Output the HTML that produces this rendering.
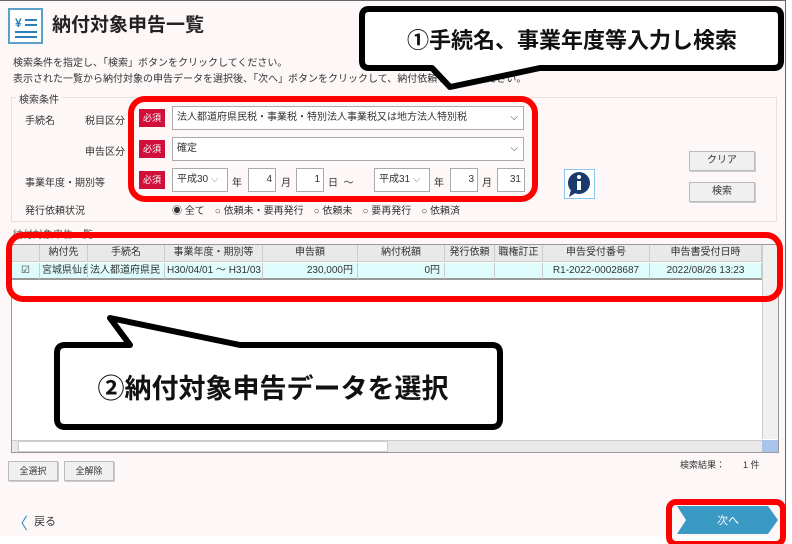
<!DOCTYPE html>
<html><head><meta charset="utf-8"><style>
*{margin:0;padding:0;box-sizing:border-box}
body{width:792px;height:544px;overflow:hidden;background:#fff;font-family:"Liberation Sans","Noto Sans CJK JP",sans-serif;color:#333;position:relative}
.a{position:absolute}
.s{font-size:10px;white-space:nowrap}
.inp{position:absolute;background:#fff;border:1px solid #aaa;font-size:10px;padding-left:4px;line-height:22px;height:24px}
.req{position:absolute;background:#d0103a;color:#fff;font-size:9px;width:26px;height:18px;line-height:18px;text-align:center}
.btn{position:absolute;background:#f0f0f0;border:1px solid #bbb;font-size:10px;text-align:center;box-shadow:1px 1px 0 #ccc}
.th{position:absolute;top:0;height:16px;line-height:16px;font-size:10px;text-align:center;border-right:1px solid #ccc}
.td{position:absolute;top:0;height:16px;line-height:16px;font-size:10px;border-right:1px solid #ccc;overflow:hidden;white-space:nowrap}
</style></head><body>
<div class="a" style="left:0;top:0;width:786px;height:536px;background:#fdf8f7;border-right:1px solid #666;border-top:1px solid #666"></div>
<svg class="a" style="left:8px;top:7px" width="36" height="38"><rect x="1" y="2" width="33" height="34" fill="#fff" stroke="#5aa0c8" stroke-width="2"/><text x="7" y="20" font-size="12" fill="#2a7fb8" font-weight="bold">¥</text><rect x="17" y="12" width="12" height="2" fill="#2a7fb8"/><rect x="17" y="17" width="12" height="2" fill="#2a7fb8"/><rect x="7" y="24" width="22" height="2" fill="#2a7fb8"/><rect x="7" y="29" width="22" height="2" fill="#2a7fb8"/></svg>
<div class="a" style="left:52px;top:10px;font-size:19px;font-weight:bold;color:#222">納付対象申告一覧</div>
<div class="a s" style="left:13px;top:54px">検索条件を指定し、「検索」ボタンをクリックしてください。</div>
<div class="a s" style="left:13px;top:70px">表示された一覧から納付対象の申告データを選択後、「次へ」ボタンをクリックして、納付依頼を行ってください。</div>
<div class="a" style="left:11px;top:97px;width:766px;height:125px;border:1px solid #e6e0de"></div>
<div class="a s" style="left:16px;top:91px;background:#fdf8f7;padding:0 3px">検索条件</div>
<div class="a s" style="left:25px;top:112px">手続名</div>
<div class="a s" style="left:85px;top:112px">税目区分</div>
<div class="a s" style="left:85px;top:143px">申告区分</div>
<div class="a s" style="left:25px;top:174px">事業年度・期別等</div>
<div class="a s" style="left:25px;top:202px">発行依頼状況</div>
<div class="req" style="left:139px;top:109px">必須</div>
<div class="req" style="left:139px;top:140px">必須</div>
<div class="req" style="left:139px;top:171px">必須</div>
<div class="inp" style="left:172px;top:106px;width:352px">法人都道府県民税・事業税・特別法人事業税又は地方法人特別税<span style="position:absolute;right:5px">⌵</span></div>
<div class="inp" style="left:172px;top:137px;width:352px">確定<span style="position:absolute;right:5px">⌵</span></div>
<div class="inp" style="left:172px;top:168px;width:56px">平成30 <span style="color:#888">⌵</span></div>
<div class="a s" style="left:232px;top:174px">年</div>
<div class="inp" style="left:248px;top:168px;width:28px;text-align:right;padding-right:3px">4</div>
<div class="a s" style="left:281px;top:174px">月</div>
<div class="inp" style="left:296px;top:168px;width:28px;text-align:right;padding-right:3px">1</div>
<div class="a s" style="left:328px;top:174px">日 &nbsp;～</div>
<div class="inp" style="left:374px;top:168px;width:56px">平成31 <span style="color:#888">⌵</span></div>
<div class="a s" style="left:434px;top:174px">年</div>
<div class="inp" style="left:450px;top:168px;width:28px;text-align:right;padding-right:3px">3</div>
<div class="a s" style="left:482px;top:174px">月</div>
<div class="inp" style="left:497px;top:168px;width:28px;text-align:right;padding-right:3px">31</div>
<div class="a s" style="left:172px;top:202px">◉ 全て　○ 依頼未・要再発行　○ 依頼未　○ 要再発行　○ 依頼済</div>
<div class="a" style="left:564px;top:169px;width:31px;height:30px;border:1px solid #8cc4f0;background:#fff"><svg width="29" height="28"><circle cx="14" cy="13" r="11" fill="#1a3a6e"/><path d="M6 20 L4 27 L12 22Z" fill="#1a3a6e"/><rect x="12" y="11" width="4" height="9" fill="#fff"/><circle cx="14" cy="7" r="2" fill="#fff"/></svg></div>
<div class="btn" style="left:689px;top:151px;width:66px;height:20px;line-height:18px">クリア</div>
<div class="btn" style="left:689px;top:182px;width:66px;height:20px;line-height:18px">検索</div>
<div class="a s" style="left:13px;top:226px;color:#555">納付対象申告一覧</div>
<div class="a" style="left:11px;top:244px;width:768px;height:209px;background:#fff;border:1px solid #999"></div>
<div class="a" style="left:12px;top:245px;width:750px;height:17px;background:#e9e9e9;border-bottom:1px solid #ccc">
<div class="th" style="left:0;width:28px"></div><div class="th" style="left:28px;width:48px">納付先</div><div class="th" style="left:76px;width:77px">手続名</div><div class="th" style="left:153px;width:98px">事業年度・期別等</div><div class="th" style="left:251px;width:95px">申告額</div><div class="th" style="left:346px;width:87px">納付税額</div><div class="th" style="left:433px;width:50px">発行依頼</div><div class="th" style="left:483px;width:48px">職権訂正</div><div class="th" style="left:531px;width:107px">申告受付番号</div><div class="th" style="left:638px;width:112px">申告書受付日時</div></div>
<div class="a" style="left:12px;top:263px;width:750px;height:17px;background:#dffcfc;border-bottom:2px solid #999">
<div class="td" style="left:0;width:28px;text-align:center">☑</div><div class="td" style="left:28px;width:48px;padding-left:2px">宮城県仙台</div><div class="td" style="left:76px;width:77px;padding-left:2px">法人都道府県民</div><div class="td" style="left:153px;width:98px;padding-left:2px">H30/04/01 ～ H31/03</div><div class="td" style="left:251px;width:95px;text-align:right;padding-right:4px">230,000円</div><div class="td" style="left:346px;width:87px;text-align:right;padding-right:4px">0円</div><div class="td" style="left:433px;width:50px"></div><div class="td" style="left:483px;width:48px"></div><div class="td" style="left:531px;width:107px;text-align:center">R1-2022-00028687</div><div class="td" style="left:638px;width:112px;text-align:center">2022/08/26 13:23</div></div>
<div class="a" style="left:762px;top:245px;width:16px;height:194px;background:#f0f0f0;border-left:1px solid #ccc"></div>
<div class="a" style="left:12px;top:440px;width:750px;height:12px;background:#e8e8e8;border-top:1px solid #ccc"><div class="a" style="left:6px;top:0;width:370px;height:11px;background:#fff;border:1px solid #ccc"></div></div>
<div class="a" style="left:762px;top:440px;width:16px;height:12px;background:#a8c4e8"></div>
<div class="btn" style="left:8px;top:461px;width:50px;height:20px;line-height:18px;font-size:9px">全選択</div>
<div class="btn" style="left:64px;top:461px;width:50px;height:20px;line-height:18px;font-size:9px">全解除</div>
<div class="a s" style="left:680px;top:458px;font-size:9px">検索結果：　　1 件</div>
<div class="a" style="left:12px;top:510px;font-size:16px;color:#3a8fc0">〈</div>
<div class="a s" style="left:34px;top:513px;font-size:11px">戻る</div>
<svg class="a" style="left:0;top:0" width="792" height="544">
<path d="M677 506 L768 506 L778 520 L768 534 L677 534 L686 520Z" fill="#3a9ac4"/>
<text x="717" y="524" fill="#fff" font-size="11" font-family="Liberation Sans,Noto Sans CJK JP,sans-serif">次へ</text>
<rect x="669" y="502" width="114" height="42" rx="7" fill="none" stroke="#f00" stroke-width="6"/>
<rect x="131" y="99" width="404" height="100" rx="14" fill="none" stroke="#f00" stroke-width="6"/>
<rect x="9" y="235" width="771" height="64" rx="14" fill="none" stroke="#f00" stroke-width="6"/>
<path d="M372 9 L774 9 Q781 9 781 16 L781 61 Q781 68 774 68 L540 68 L450 87 L432 68 L369 68 Q362 68 362 61 L362 16 Q362 9 369 9Z" fill="#fff" stroke="#000" stroke-width="6" stroke-linejoin="round"/>
<text x="572" y="48" text-anchor="middle" font-size="22" font-weight="bold" fill="#111" font-family="Liberation Sans,Noto Sans CJK JP,sans-serif">①手続名、事業年度等入力し検索</text>
<path d="M65 345 L130 345 L110 318 L240 345 L492 345 Q500 345 500 353 L500 419 Q500 427 492 427 L65 427 Q57 427 57 419 L57 353 Q57 345 65 345Z" fill="#fff" stroke="#000" stroke-width="6" stroke-linejoin="round"/>
<text x="273" y="398" text-anchor="middle" font-size="27" font-weight="bold" fill="#111" font-family="Liberation Sans,Noto Sans CJK JP,sans-serif">②納付対象申告データを選択</text>
</svg>
</body></html>
